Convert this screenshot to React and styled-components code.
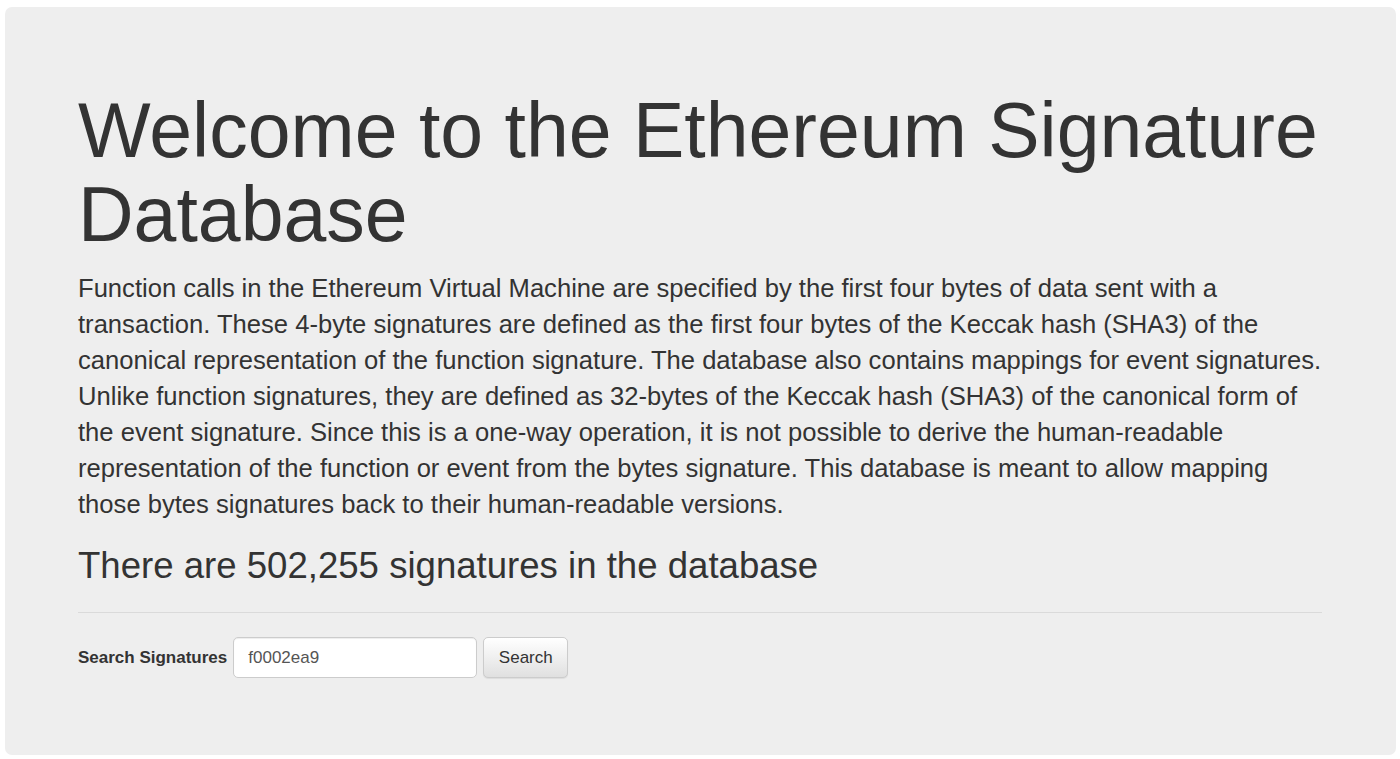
import styled, { createGlobalStyle } from 'styled-components';

const GlobalStyle = createGlobalStyle`
  html, body {
    margin: 0;
    padding: 0;
    background: #fff;
  }
  body {
    font-family: "Liberation Sans", Arial, Helvetica, sans-serif;
    color: #333;
  }
`;

const Page = styled.div`
  padding: 7px 4px 4px 5px;
`;

const Jumbotron = styled.div`
  background: #eee;
  border-radius: 7px;
  height: 748px;
  box-sizing: border-box;
  padding: 81px 74px 0 73px;
`;

const Title = styled.h1`
  margin: 0 0 14px;
  font-size: 77px;
  line-height: 84px;
  font-weight: 400;
  color: #333;
`;

const Lead = styled.p`
  margin: 0;
  font-size: 25.6px;
  line-height: 36px;
  color: #333;
`;

const Count = styled.h2`
  margin: 24px 0 0;
  font-size: 36.6px;
  line-height: 40px;
  font-weight: 400;
  color: #333;
`;

const Rule = styled.hr`
  margin: 26px 0 24px;
  border: 0;
  border-top: 1px solid #dadada;
`;

const SearchForm = styled.form`
  display: flex;
  align-items: center;
  gap: 6px;
`;

const Label = styled.label`
  font-size: 17px;
  font-weight: 700;
  color: #333;
`;

const Input = styled.input`
  width: 244px;
  height: 41px;
  box-sizing: border-box;
  padding: 6px 14px;
  font-family: inherit;
  font-size: 17px;
  color: #555;
  background: #fff;
  border: 1px solid #ccc;
  border-radius: 5px;
  box-shadow: inset 0 1px 1px rgba(0, 0, 0, 0.075);
  outline: none;
`;

const Button = styled.button`
  width: 85px;
  height: 41px;
  box-sizing: border-box;
  font-family: inherit;
  font-size: 17px;
  color: #333;
  background-image: linear-gradient(to bottom, #fff 0, #e0e0e0 100%);
  border: 1px solid #ccc;
  border-radius: 5px;
  box-shadow: inset 0 1px 0 rgba(255, 255, 255, 0.15), 0 1px 1px rgba(0, 0, 0, 0.075);
  cursor: pointer;
`;

export default function App() {
  return (
    <Page>
      <GlobalStyle />
      <Jumbotron>
        <Title>Welcome to the Ethereum Signature Database</Title>
        <Lead>
          Function calls in the Ethereum Virtual Machine are specified by the first four bytes of
          data sent with a transaction. These 4-byte signatures are defined as the first four bytes
          of the Keccak hash (SHA3) of the canonical representation of the function signature. The
          database also contains mappings for event signatures. Unlike function signatures, they are
          defined as 32-bytes of the Keccak hash (SHA3) of the canonical form of the event
          signature. Since this is a one-way operation, it is not possible to derive the
          human-readable representation of the function or event from the bytes signature. This
          database is meant to allow mapping those bytes signatures back to their human-readable
          versions.
        </Lead>
        <Count>There are 502,255 signatures in the database</Count>
        <Rule />
        <SearchForm onSubmit={(e) => e.preventDefault()}>
          <Label htmlFor="sig">Search Signatures</Label>
          <Input id="sig" type="text" defaultValue="f0002ea9" />
          <Button type="submit">Search</Button>
        </SearchForm>
      </Jumbotron>
    </Page>
  );
}
